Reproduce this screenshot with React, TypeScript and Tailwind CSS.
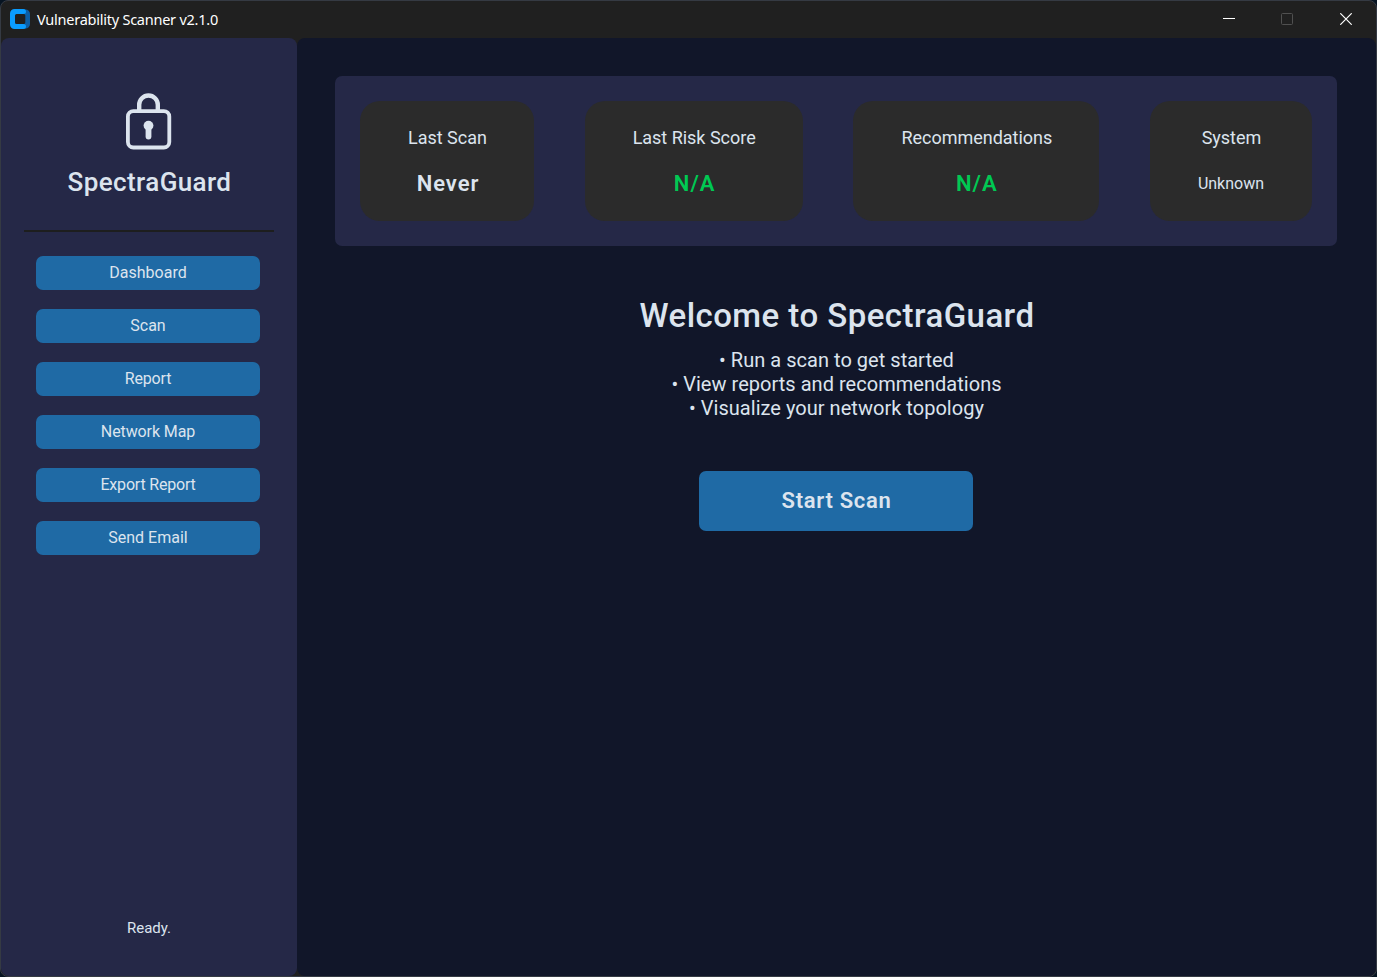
import React from "react";

const navItems = [
  { label: "Dashboard", tracking: "tracking-normal" },
  { label: "Scan", tracking: "tracking-normal" },
  { label: "Report", tracking: "tracking-[-0.15px]" },
  { label: "Network Map", tracking: "tracking-[-0.1px]" },
  { label: "Export Report", tracking: "tracking-[-0.2px]" },
  { label: "Send Email", tracking: "tracking-normal" },
];

const stats = [
  { label: "Last Scan", value: "Never", width: "w-[174px]", style: "pl-[2px] text-[22px] font-semibold tracking-[0.9px] text-[#dce4ee]" },
  { label: "Last Risk Score", value: "N/A", width: "w-[218px]", style: "pl-[2px] text-[22px] font-semibold tracking-[1px] text-[#00c853]" },
  { label: "Recommendations", value: "N/A", width: "w-[246px]", style: "pl-px text-[22px] font-semibold tracking-[1px] text-[#00c853]" },
  { label: "System", value: "Unknown", width: "w-[162px]", style: "text-[16px] text-[#dce4ee]" },
];

function TitleBar() {
  return (
    <header className="flex h-[37px] shrink-0 items-center justify-between pb-[2px]">
      <div className="flex items-center gap-[7px] pl-[9px]">
        <svg width="20" height="20" viewBox="0 0 20 20">
          <path d="M14 0.500H15.500A4.500 4.500 0 0 1 20 5V15A4.500 4.500 0 0 1 15.500 19.500H14V15A1.500 1.500 0 0 0 15.300 13.500V6.500A1.500 1.500 0 0 0 14 5Z" fill="#0c5ea6" />
          <path d="M4.500 0H13.500A2.500 2.500 0 0 1 13.500 5H6.500A1.500 1.500 0 0 0 5 6.500V13.500A1.500 1.500 0 0 0 6.500 15H13.500A2.500 2.500 0 0 1 13.500 20H4.500A4.500 4.500 0 0 1 0 15.500V4.500A4.500 4.500 0 0 1 4.500 0Z" fill="#0a9cff" />
        </svg>
        <h1 className="pt-px font-['Noto_Sans',sans-serif] text-[14.5px] leading-5 tracking-[-0.24px] whitespace-nowrap text-white">
          Vulnerability Scanner v2.1.0
        </h1>
      </div>
      <div className="flex">
        <div className="flex w-[58px] justify-center">
          <svg width="12" height="12" viewBox="0 0 12 12"><path d="M0 5.500H12" stroke="#fff" /></svg>
        </div>
        <div className="flex w-[58px] justify-center">
          <svg width="12" height="12" viewBox="0 0 12 12"><rect x="0.500" y="0.500" width="11" height="11" rx="1" fill="none" stroke="#505050" /></svg>
        </div>
        <div className="flex w-[60px] justify-center">
          <svg width="12" height="12" viewBox="0 0 12 12"><path d="M0.300 0.300L11.700 11.700M11.700 0.300L0.300 11.700" stroke="#fff" strokeWidth="1.200" /></svg>
        </div>
      </div>
    </header>
  );
}

function Sidebar() {
  return (
    <aside className="flex w-[296px] shrink-0 flex-col items-center rounded-lg bg-[#252847] pt-[55px]">
      <svg width="46" height="57" viewBox="0 0 46 57" fill="none">
        <path d="M13.200 18V11.800A9.300 9.300 0 0 1 31.800 11.800V18" stroke="#dce4ee" strokeWidth="4.400" />
        <rect x="1.900" y="18.100" width="41.400" height="36.400" rx="5.500" stroke="#dce4ee" strokeWidth="3.800" />
        <circle cx="22.500" cy="32.600" r="4.900" fill="#dce4ee" />
        <path d="M22.500 34V43.500" stroke="#dce4ee" strokeWidth="5.800" strokeLinecap="round" />
      </svg>
      <div className="mt-4 pl-px text-[26px] leading-8 font-medium tracking-[0.4px] whitespace-nowrap">SpectraGuard</div>
      <div className="mt-8 h-0.5 w-[250px] bg-[#1d1e1e]" />
      <nav className="mt-6 flex flex-col gap-[19px] pr-[2px]">
        {navItems.map((item) => (
          <button key={item.label} className={`h-[34px] w-[224px] rounded-[7px] bg-[#1f6aa5] text-[16px] leading-5 ${item.tracking}`}>
            {item.label}
          </button>
        ))}
      </nav>
      <div className="mt-auto mb-[38px] text-[15px] leading-5">Ready.</div>
    </aside>
  );
}

export default function App() {
  return (
    <div className="h-[977px] w-[1377px] overflow-hidden bg-[#071422] font-[Roboto,sans-serif] text-[#dce4ee]">
      <div className="flex h-full flex-col rounded-lg border border-[#353a43] bg-[#202020]">
        <TitleBar />
        <div className="flex min-h-0 flex-1">
          <Sidebar />
          <main className="flex flex-1 flex-col items-center rounded-lg bg-[#111629] pt-[38px] pr-px">
            <section className="flex h-[170px] w-[1002px] items-center justify-between rounded-[7px] bg-[#252847] px-[25px]">
              {stats.map((stat) => (
                <div key={stat.label} className={`flex h-[120px] flex-col items-center rounded-[20px] bg-[#2b2b2b] pt-[26px] ${stat.width}`}>
                  <div className="pl-px text-[18px] leading-[22px] tracking-[-0.02px] whitespace-nowrap">{stat.label}</div>
                  <div className={`mt-[22px] leading-[26px] ${stat.style}`}>{stat.value}</div>
                </div>
              ))}
            </section>
            <h2 className="mt-[50px] pl-[2px] text-[33px] leading-10 font-medium tracking-[0.45px] whitespace-nowrap">Welcome to SpectraGuard</h2>
            <div className="mt-3 pl-px text-center text-[20px] leading-6 tracking-[0.03px] whitespace-nowrap">
              <p>• Run a scan to get started</p>
              <p>• View reports and recommendations</p>
              <p>• Visualize your network topology</p>
            </div>
            <button className="mt-[51px] h-[60px] w-[274px] rounded-[7px] bg-[#1f6aa5] pl-px text-[22px] leading-[26px] font-semibold tracking-[0.7px]">
              Start Scan
            </button>
          </main>
        </div>
      </div>
    </div>
  );
}
